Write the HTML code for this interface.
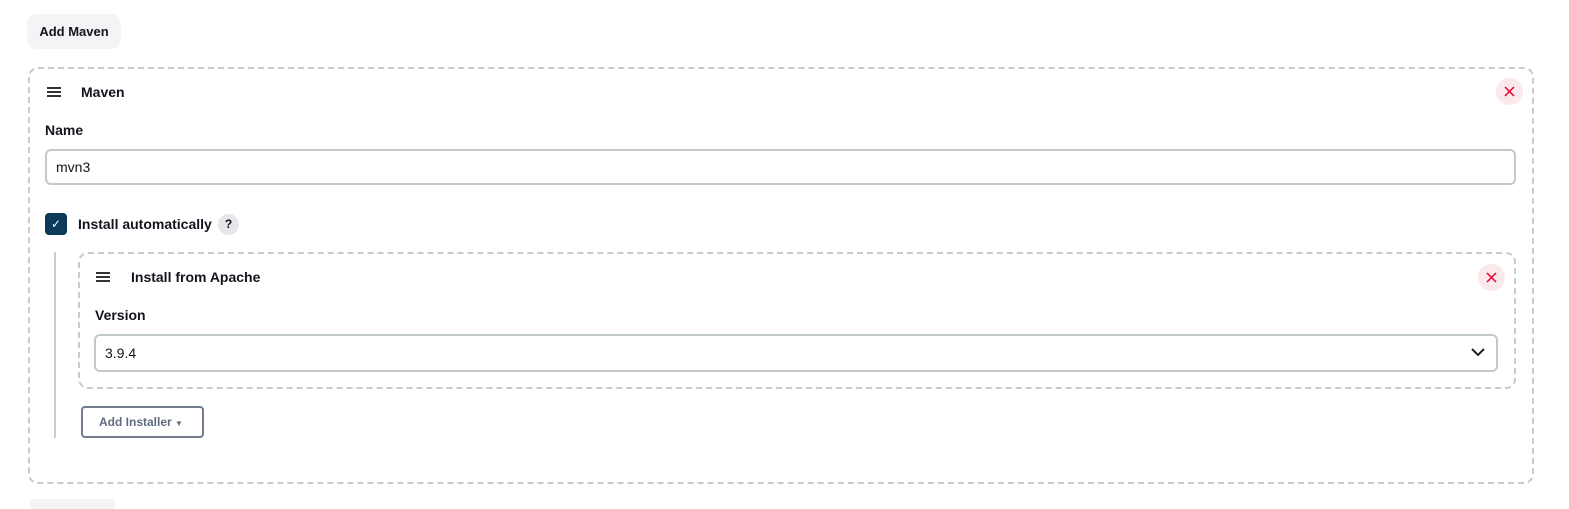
<!DOCTYPE html>
<html><head><style>
*{box-sizing:border-box;margin:0;padding:0}
body{width:1569px;height:502px;background:#fff;font-family:"Liberation Sans",sans-serif;color:#14141f;position:relative;overflow:hidden;font-size:14px}
.a{position:absolute}
.b{font-weight:bold}
.ham{position:absolute;width:14px;height:10px;border-top:2px solid #333;border-bottom:2px solid #333}
.ham:after{content:"";position:absolute;left:0;right:0;top:2px;border-top:2px solid #333}
.x{position:absolute;width:27px;height:27px;border-radius:50%;background:#fbe8ea}
.x svg{position:absolute;left:8px;top:8px}
</style></head><body>
<div class="a b" style="left:27px;top:14px;width:94px;height:35px;background:#f4f4f6;border-radius:10px;font-size:13px;line-height:35px;text-align:center">Add Maven</div>
<div class="a" style="left:28px;top:67px;width:1506px;height:417px;border:2px dashed #c5ccd0;border-radius:10px"></div>
<div class="ham" style="left:47px;top:87px"></div>
<div class="a b" style="left:81px;top:84px;font-size:14px">Maven</div>
<div class="x" style="left:1496px;top:78px"><svg width="11" height="11"><path d="M1 1l9 9M10 1l-9 9" stroke="#e6002e" stroke-width="1.5"/></svg></div>
<div class="a b" style="left:45px;top:122px">Name</div>
<div class="a" style="left:45px;top:149px;width:1471px;height:36px;border:2px solid #c1c9cd;border-radius:6px;padding-left:9px;line-height:32px">mvn3</div>
<div class="a" style="left:45px;top:213px;width:22px;height:22px;background:#0b3a5a;border-radius:4px;color:#fff;text-align:center;line-height:22px;font-size:12px">✓</div>
<div class="a b" style="left:78px;top:216px">Install automatically</div>
<div class="a b" style="left:218px;top:214px;width:21px;height:21px;border-radius:50%;background:#e6e6e8;font-size:12px;text-align:center;line-height:21px">?</div>
<div class="a" style="left:54px;top:252px;width:2px;height:186px;background:#ccc"></div>
<div class="a" style="left:78px;top:252px;width:1438px;height:137px;border:2px dashed #c5ccd0;border-radius:10px"></div>
<div class="ham" style="left:96px;top:272px"></div>
<div class="a b" style="left:131px;top:269px">Install from Apache</div>
<div class="x" style="left:1478px;top:264px"><svg width="11" height="11"><path d="M1 1l9 9M10 1l-9 9" stroke="#e6002e" stroke-width="1.5"/></svg></div>
<div class="a b" style="left:95px;top:307px">Version</div>
<div class="a" style="left:94px;top:334px;width:1404px;height:38px;border:2px solid #c1c9cd;border-radius:6px;padding-left:9px;line-height:34px">3.9.4</div>
<svg class="a" style="left:1471px;top:347px" width="14" height="10"><path d="M1 2l6 6 6-6" fill="none" stroke="#222" stroke-width="2"/></svg>
<div class="a b" style="left:81px;top:406px;width:123px;height:32px;border:2px solid #717d8c;border-radius:4px;color:#5f6b80;font-size:12px;line-height:28px;padding-left:16px">Add Installer <span style="font-size:8px">▼</span></div>
<div class="a" style="left:30px;top:499px;width:86px;height:10px;background:#f4f4f6;border-radius:8px"></div>
</body></html>
